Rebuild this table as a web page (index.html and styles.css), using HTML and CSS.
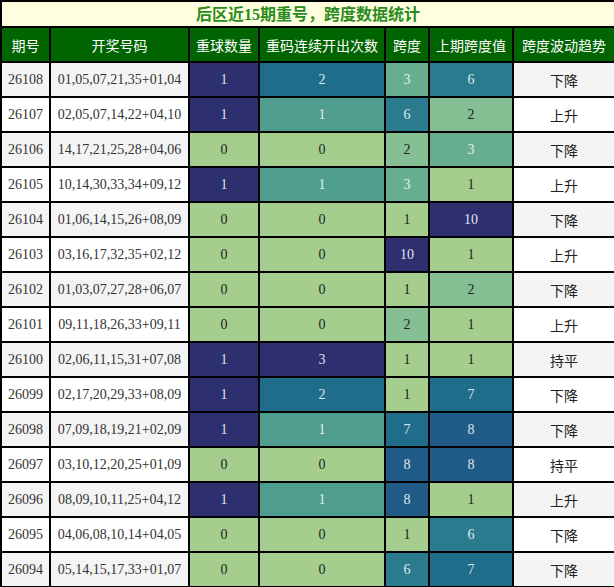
FILE: index.html
```html
<!DOCTYPE html>
<html lang="zh-CN">
<head>
<meta charset="utf-8">
<title>后区近15期重号，跨度数据统计</title>
<link rel="stylesheet" href="styles.css">
</head>
<body>
<table class="stats">
  <colgroup>
    <col class="c-id"><col class="c-nums"><col class="c-rep"><col class="c-run"><col class="c-span"><col class="c-prev"><col class="c-trend">
  </colgroup>
  <thead>
    <tr><th colspan="7" class="title">后区近<span class="num">15</span>期重号，跨度数据统计</th></tr>
    <tr class="head">
      <th>期号</th><th>开奖号码</th><th>重球数量</th><th>重码连续开出次数</th><th>跨度</th><th>上期跨度值</th><th>跨度波动趋势</th>
    </tr>
  </thead>
  <tbody>
    <tr class="alt"><td>26108</td><td>01,05,07,21,35+01,04</td><td class="v-navy">1</td><td class="v-blue">2</td><td class="v-mint">3</td><td class="v-teal">6</td><td class="trend">下降</td></tr>
    <tr><td>26107</td><td>02,05,07,14,22+04,10</td><td class="v-navy">1</td><td class="v-sea">1</td><td class="v-teal">6</td><td class="v-pale">2</td><td class="trend">上升</td></tr>
    <tr class="alt"><td>26106</td><td>14,17,21,25,28+04,06</td><td class="v-lg">0</td><td class="v-lg">0</td><td class="v-pale">2</td><td class="v-mint">3</td><td class="trend">下降</td></tr>
    <tr><td>26105</td><td>10,14,30,33,34+09,12</td><td class="v-navy">1</td><td class="v-sea">1</td><td class="v-mint">3</td><td class="v-lg">1</td><td class="trend">上升</td></tr>
    <tr class="alt"><td>26104</td><td>01,06,14,15,26+08,09</td><td class="v-lg">0</td><td class="v-lg">0</td><td class="v-lg">1</td><td class="v-navy">10</td><td class="trend">下降</td></tr>
    <tr><td>26103</td><td>03,16,17,32,35+02,12</td><td class="v-lg">0</td><td class="v-lg">0</td><td class="v-navy">10</td><td class="v-lg">1</td><td class="trend">上升</td></tr>
    <tr class="alt"><td>26102</td><td>01,03,07,27,28+06,07</td><td class="v-lg">0</td><td class="v-lg">0</td><td class="v-lg">1</td><td class="v-pale">2</td><td class="trend">下降</td></tr>
    <tr><td>26101</td><td>09,11,18,26,33+09,11</td><td class="v-lg">0</td><td class="v-lg">0</td><td class="v-pale">2</td><td class="v-lg">1</td><td class="trend">上升</td></tr>
    <tr class="alt"><td>26100</td><td>02,06,11,15,31+07,08</td><td class="v-navy">1</td><td class="v-navy">3</td><td class="v-lg">1</td><td class="v-lg">1</td><td class="trend">持平</td></tr>
    <tr><td>26099</td><td>02,17,20,29,33+08,09</td><td class="v-navy">1</td><td class="v-blue">2</td><td class="v-lg">1</td><td class="v-blue">7</td><td class="trend">下降</td></tr>
    <tr class="alt"><td>26098</td><td>07,09,18,19,21+02,09</td><td class="v-navy">1</td><td class="v-sea">1</td><td class="v-blue">7</td><td class="v-deep">8</td><td class="trend">下降</td></tr>
    <tr><td>26097</td><td>03,10,12,20,25+01,09</td><td class="v-lg">0</td><td class="v-lg">0</td><td class="v-deep">8</td><td class="v-deep">8</td><td class="trend">持平</td></tr>
    <tr class="alt"><td>26096</td><td>08,09,10,11,25+04,12</td><td class="v-navy">1</td><td class="v-sea">1</td><td class="v-deep">8</td><td class="v-lg">1</td><td class="trend">上升</td></tr>
    <tr><td>26095</td><td>04,06,08,10,14+04,05</td><td class="v-lg">0</td><td class="v-lg">0</td><td class="v-lg">1</td><td class="v-teal">6</td><td class="trend">下降</td></tr>
    <tr class="alt"><td>26094</td><td>05,14,15,17,33+01,07</td><td class="v-lg">0</td><td class="v-lg">0</td><td class="v-teal">6</td><td class="v-blue">7</td><td class="trend">下降</td></tr>
  </tbody>
</table>
</body>
</html>
```
FILE: styles.css
```css
html, body {
  margin: 0;
  padding: 0;
  background: #ffffff;
}

.stats {
  width: 614px;
  border-collapse: collapse;
  table-layout: fixed;
  font-family: "Liberation Serif", "Noto Sans CJK SC", serif;
  font-size: 14px;
  color: #333333;
}

.c-id { width: 49px; }
.c-nums { width: 139px; }
.c-rep { width: 70px; }
.c-run { width: 126px; }
.c-span { width: 44px; }
.c-prev { width: 84px; }
.c-trend { width: 102px; }

.stats th,
.stats td {
  border: 2px solid #000000;
  padding: 0;
  text-align: center;
  vertical-align: middle;
}

.title {
  height: 22px;
  background: #ffffe0;
  color: #2a8c1f;
  font-family: "Noto Sans CJK SC", sans-serif;
  font-weight: bold;
  font-size: 16px;
  line-height: 22px;
}

.title .num {
  font-family: "Liberation Serif", serif;
}

.head th {
  height: 33px;
  background: #006400;
  color: #ffffff;
  font-family: "Noto Sans CJK SC", sans-serif;
  font-weight: normal;
  font-size: 14px;
}

.stats td {
  height: 33px;
  background: #ffffff;
}

.stats tr.alt td {
  background: #f4f4f4;
}

.stats td.trend {
  font-family: "Noto Sans CJK SC", sans-serif;
  color: #222222;
}

.stats tr td.v-navy { background: #2d2f6e; color: #dfe3ee; }
.stats tr td.v-deep { background: #205a86; color: #dfe7ef; }
.stats tr td.v-blue { background: #1f6d8b; color: #dbe8ee; }
.stats tr td.v-teal { background: #2a7b8e; color: #dfecef; }
.stats tr td.v-sea { background: #4e9d8f; color: #e3f0ec; }
.stats tr td.v-mint { background: #66ae8f; color: #e3f1ea; }
.stats tr td.v-pale { background: #86bf93; color: #222222; }
.stats tr td.v-lg { background: #a5ce8e; color: #222222; }
```
